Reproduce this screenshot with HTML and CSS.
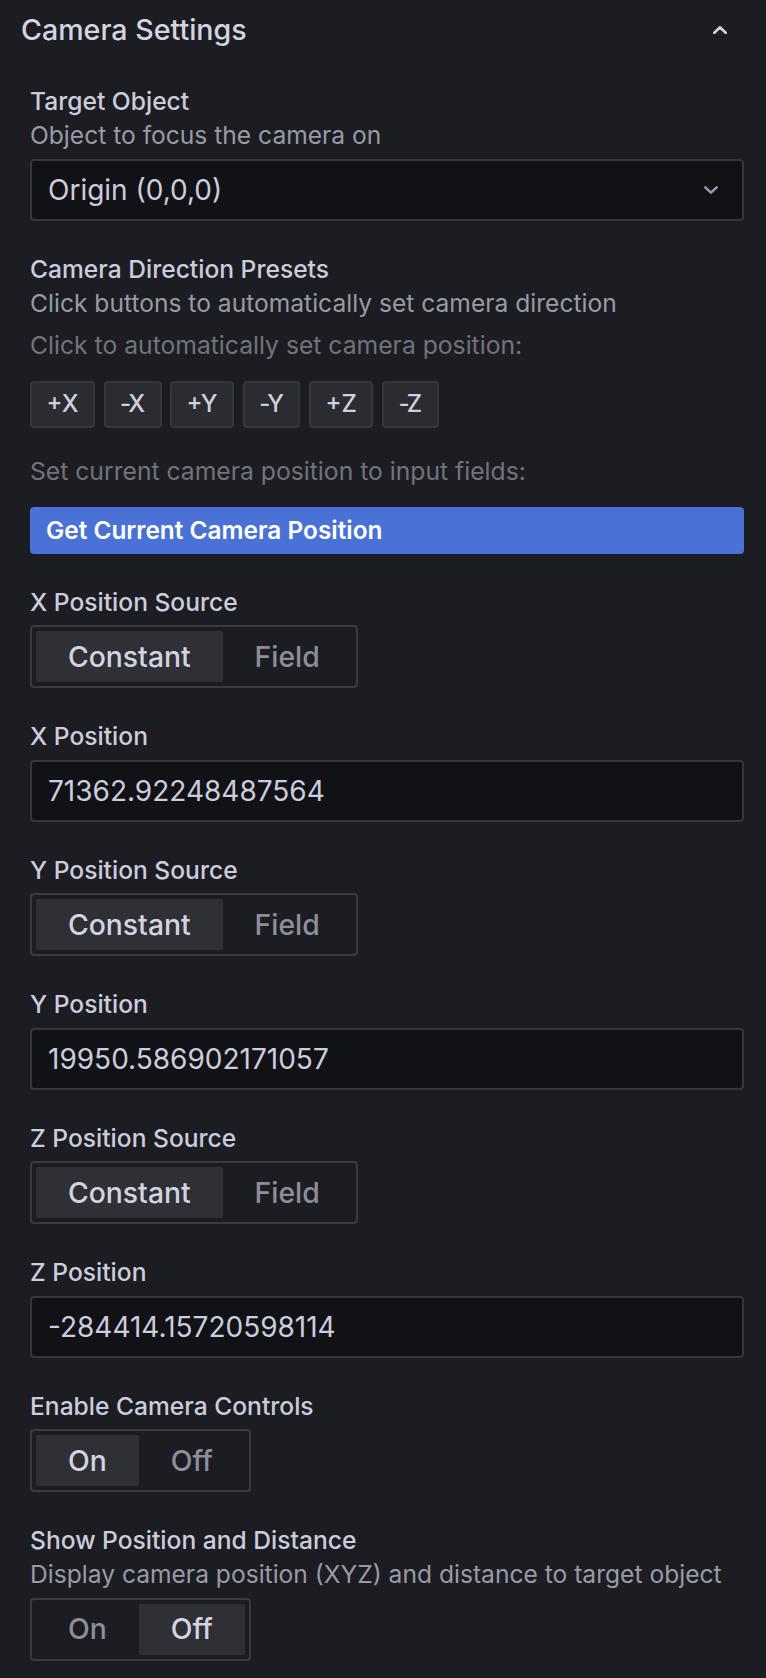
FILE: index.html
```html
<!DOCTYPE html>
<html>
<head>
<meta charset="utf-8">
<link rel="stylesheet" href="styles.css">
</head>
<body>
<div class="panel">
  <div class="header">
    <span class="title">Camera Settings</span>
    <svg class="chev-up" width="14" height="8" viewBox="0 0 14 8"><path d="M1.3 6.8 L7 1.3 L12.7 6.8" fill="none" stroke="currentColor" stroke-width="2.6" stroke-linecap="round" stroke-linejoin="round"/></svg>
  </div>
  <div class="body">
    <div class="field">
      <div class="label">Target Object</div>
      <div class="desc">Object to focus the camera on</div>
      <div class="control select">
        <span>Origin (0,0,0)</span>
        <svg class="chev-down" width="14" height="8" viewBox="0 0 14 8"><path d="M1.3 1.3 L7 6.7 L12.7 1.3" fill="none" stroke="currentColor" stroke-width="2.4" stroke-linecap="round" stroke-linejoin="round"/></svg>
      </div>
    </div>

    <div class="field">
      <div class="label">Camera Direction Presets</div>
      <div class="desc">Click buttons to automatically set camera direction</div>
      <div class="hint hint-first">Click to automatically set camera position:</div>
      <div class="btn-row">
        <button class="btn">+X</button>
        <button class="btn"><span class="minus">-</span>X</button>
        <button class="btn">+Y</button>
        <button class="btn"><span class="minus">-</span>Y</button>
        <button class="btn">+Z</button>
        <button class="btn"><span class="minus">-</span>Z</button>
      </div>
      <div class="hint hint-second">Set current camera position to input fields:</div>
      <button class="primary">Get Current Camera Position</button>
    </div>

    <div class="field">
      <div class="label">X Position Source</div>
      <div class="segmented">
        <span class="opt active">Constant</span>
        <span class="opt">Field</span>
      </div>
    </div>
    <div class="field">
      <div class="label">X Position</div>
      <div class="control input">71362.92248487564</div>
    </div>

    <div class="field">
      <div class="label">Y Position Source</div>
      <div class="segmented">
        <span class="opt active">Constant</span>
        <span class="opt">Field</span>
      </div>
    </div>
    <div class="field">
      <div class="label">Y Position</div>
      <div class="control input">19950.586902171057</div>
    </div>

    <div class="field">
      <div class="label">Z Position Source</div>
      <div class="segmented">
        <span class="opt active">Constant</span>
        <span class="opt">Field</span>
      </div>
    </div>
    <div class="field">
      <div class="label">Z Position</div>
      <div class="control input">-284414.15720598114</div>
    </div>

    <div class="field">
      <div class="label">Enable Camera Controls</div>
      <div class="segmented">
        <span class="opt active">On</span>
        <span class="opt">Off</span>
      </div>
    </div>

    <div class="field">
      <div class="label">Show Position and Distance</div>
      <div class="desc">Display camera position (XYZ) and distance to target object</div>
      <div class="segmented">
        <span class="opt">On</span>
        <span class="opt active">Off</span>
      </div>
    </div>
  </div>
</div>
</body>
</html>
```

FILE: styles.css
```css
html, body {
  margin: 0;
  padding: 0;
  background: #1c1d22;
}

body {
  font-family: Inter, "Noto Sans", "Liberation Sans", sans-serif;
  color: #ccccdc;
  width: 766px;
  min-height: 1678px;
}

.panel {
  background: #1c1d22;
  min-height: 1678px;
}

.header {
  height: 60px;
  display: flex;
  align-items: center;
  justify-content: space-between;
  padding: 0 39px 0 21px;
}

.title {
  font-size: 28.6px;
  font-weight: 500;
  color: #d4d4e0;
  line-height: 34px;
}

.chev-up {
  color: #d4d4e0;
  display: block;
}

.body {
  padding: 26px 22px 0 30px;
}

.field {
  display: flex;
  flex-direction: column;
  align-items: flex-start;
  margin-bottom: 33px;
}

.label {
  font-size: 24.6px;
  font-weight: 500;
  line-height: 30px;
  color: #ccccdc;
}

.desc {
  font-size: 24.6px;
  font-weight: 400;
  line-height: 30px;
  margin-top: 4px;
  color: #9a9aa6;
}

.label + .control,
.label + .segmented,
.desc + .control,
.desc + .segmented {
  margin-top: 8.5px;
}

.control {
  box-sizing: border-box;
  align-self: stretch;
  height: 62px;
  background: #111216;
  border: 2px solid #36373d;
  border-radius: 4px;
  display: flex;
  align-items: center;
  padding: 0 24px 0 16px;
  font-size: 28px;
  color: #ccccdc;
}

.select {
  justify-content: space-between;
}

.chev-down {
  color: #9d9da8;
  display: block;
}

.hint {
  font-size: 24.7px;
  line-height: 30px;
  color: #72737b;
}

.hint-first {
  margin-top: 12px;
}

.hint-second {
  margin-top: 28px;
}

.btn-row {
  display: flex;
  gap: 8.6px;
  margin-top: 21px;
}

.btn {
  box-sizing: border-box;
  height: 47px;
  padding: 0 14.5px;
  background: #2b2c32;
  border: 2px solid #36373d;
  border-radius: 4px;
  color: #d0d0dc;
  font-family: inherit;
  font-size: 24px;
  font-weight: 500;
  line-height: 1;
}

.minus {
  margin-right: -3px;
}

.primary {
  box-sizing: border-box;
  align-self: stretch;
  margin-top: 21px;
  height: 47px;
  padding: 0 16px;
  text-align: left;
  background: #4a72d6;
  border: none;
  border-radius: 4px;
  color: #ffffff;
  font-family: inherit;
  font-size: 24.4px;
  font-weight: 600;
}

.segmented {
  box-sizing: border-box;
  display: flex;
  height: 63px;
  padding: 4px;
  border: 2px solid #3a3b41;
  border-radius: 4px;
}

.opt {
  display: flex;
  align-items: center;
  padding: 0 32px;
  font-size: 28.3px;
  font-weight: 500;
  color: #8e8e99;
  border-radius: 2px;
}

.opt.active {
  background: #2f3036;
  color: #d4d4e0;
}
```
